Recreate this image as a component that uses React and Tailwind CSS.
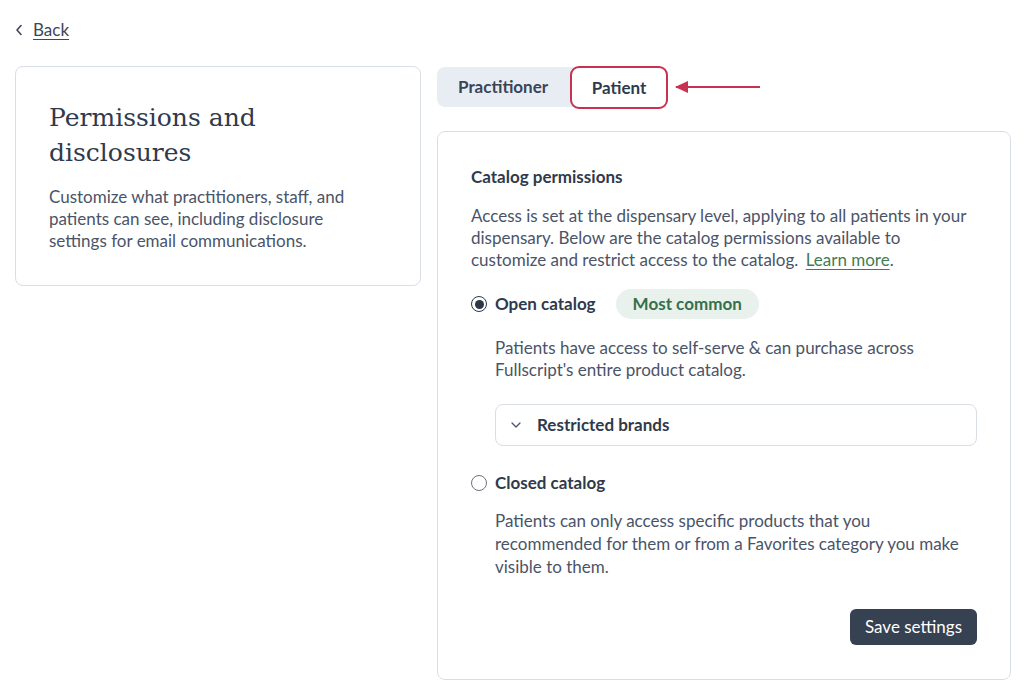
const RadioDot = ({ checked }) => (
    <span
        className={
            checked
                ? "w-4 h-4 rounded-full border-[1.5px] border-[#2d3748] flex items-center justify-center shrink-0"
                : "w-4 h-4 rounded-full border-[1.5px] border-[#6b7280] shrink-0"
        }
    >
        {checked && <span className="w-[9px] h-[9px] rounded-full bg-[#2d3748]" />}
    </span>
);

const App = () => {
    return (
        <div
            className="w-[1024px] h-[689px] bg-white text-[#4a5468] overflow-hidden"
            style={{ fontFamily: "Lato, 'Noto Sans', sans-serif" }}
        >
            <div className="pl-[15px] pt-[19px]">
                <a className="flex items-center gap-[10px] h-[22px] text-[17px] text-[#3d4759] w-max">
                    <svg width="8" height="12" viewBox="0 0 8 12" fill="none">
                        <path d="M6 1.5L2 6l4 4.5" stroke="#3d4759" strokeWidth="1.6" strokeLinecap="round" strokeLinejoin="round" />
                    </svg>
                    <span className="underline underline-offset-[3px]">Back</span>
                </a>

                <div className="flex gap-4 mt-[25px]">
                    <div className="w-[406px] h-[220px] border border-[#d9dee6] rounded-lg px-[33px] pt-[33px]">
                        <h1
                            className="text-[25px] leading-[35px] text-[#2f3a4c]"
                            style={{ fontFamily: "'DejaVu Serif', serif" }}
                        >
                            Permissions and
                            <br />
                            disclosures
                        </h1>
                        <p className="mt-[16px] text-[17px] leading-[22px] whitespace-nowrap">
                            Customize what practitioners, staff, and
                            <br />
                            patients can see, including disclosure
                            <br />
                            settings for email communications.
                        </p>
                    </div>

                    <div className="w-[574px]">
                        <div className="flex items-center">
                            <div className="flex bg-[#e8edf3] rounded-lg h-[40px] mt-[1px]">
                                <button className="pl-[21px] pr-[22px] text-[17px] font-bold text-[#3a4456]">Practitioner</button>
                                <button className="w-[98px] h-[43px] -mt-[1px] bg-white rounded-[9px] border-2 border-[#c8314f] text-[17px] font-bold text-[#2f3a4c]">
                                    Patient
                                </button>
                            </div>
                            <svg width="90" height="14" viewBox="0 0 90 14" className="ml-[6px] mt-[1px]">
                                <path d="M2 7h84" stroke="#c8314f" strokeWidth="2" />
                                <path d="M1 7l13-6v12z" fill="#c8314f" />
                            </svg>
                        </div>

                        <div className="mt-[24px] h-[549px] border border-[#d9dee6] rounded-lg px-[33px] pt-[34px]">
                            <h2 className="text-[17px] font-bold text-[#2f3a4c] leading-[22px]">Catalog permissions</h2>
                            <p className="mt-[17px] text-[17px] leading-[22px] whitespace-nowrap">
                                Access is set at the dispensary level, applying to all patients in your
                                <br />
                                dispensary. Below are the catalog permissions available to
                                <br />
                                customize and restrict access to the catalog.{" "}
                                <a className="ml-[3px] text-[#3f7d52] underline underline-offset-[3px]">Learn more</a>.
                            </p>

                            <div className="flex items-center mt-[18px] h-[30px]">
                                <RadioDot checked />
                                <span className="ml-[8px] text-[17px] font-bold text-[#2f3a4c]">Open catalog</span>
                                <span className="ml-[20px] h-[30px] px-[17px] rounded-full bg-[#e9f1ec] text-[#35704a] font-bold text-[17px] flex items-center">
                                    Most common
                                </span>
                            </div>
                            <div className="pl-[24px]">
                                <p className="mt-[18px] text-[17px] leading-[22px]">
                                    Patients have access to self-serve &amp; can purchase across
                                    <br />
                                    Fullscript's entire product catalog.
                                </p>
                                <div className="mt-[23px] h-[42px] border border-[#d9dee6] rounded-lg flex items-center pl-[15px]">
                                    <svg width="10" height="6" viewBox="0 0 10 6" fill="none">
                                        <path d="M1 1l4 4 4-4" stroke="#4a5468" strokeWidth="1.3" strokeLinecap="round" strokeLinejoin="round" />
                                    </svg>
                                    <span className="ml-[16px] text-[17px] font-bold text-[#2f3a4c]">Restricted brands</span>
                                </div>
                            </div>

                            <div className="flex items-center mt-[24px] h-[26px]">
                                <RadioDot />
                                <span className="ml-[8px] text-[17px] font-bold text-[#2f3a4c]">Closed catalog</span>
                            </div>
                            <p className="pl-[24px] mt-[13px] text-[17px] leading-[23px]">
                                Patients can only access specific products that you
                                <br />
                                recommended for them or from a Favorites category you make
                                <br />
                                visible to them.
                            </p>

                            <div className="flex justify-end mt-[31px]">
                                <button className="h-[36px] px-[15px] rounded-md bg-[#364152] text-white text-[17px]">
                                    Save settings
                                </button>
                            </div>
                        </div>
                    </div>
                </div>
            </div>
        </div>
    );
};

export default App;
